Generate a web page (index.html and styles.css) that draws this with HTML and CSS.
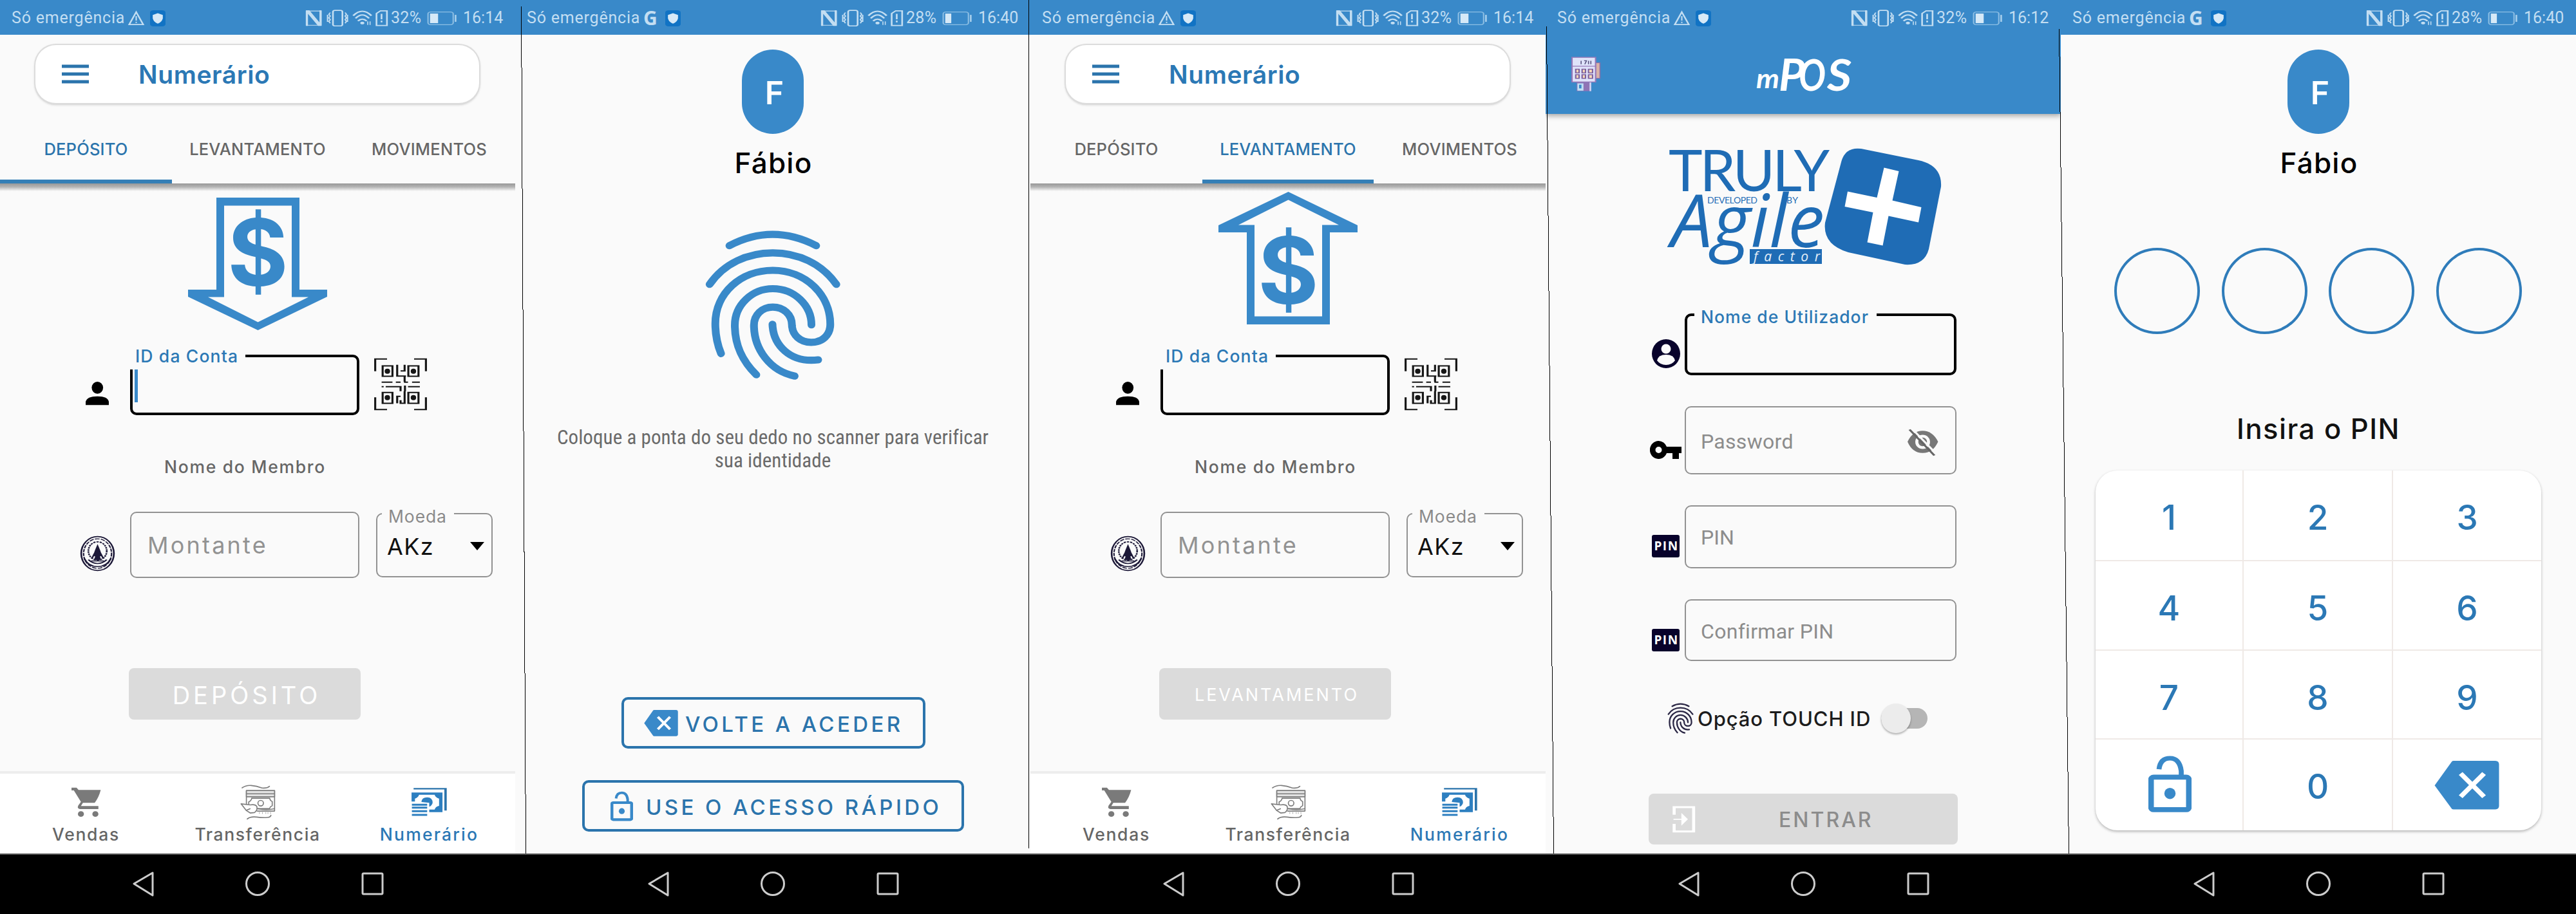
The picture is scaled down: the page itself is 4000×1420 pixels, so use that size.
FILE: index.html
```html
<!DOCTYPE html>
<html lang="pt">
<head>
<meta charset="utf-8">
<title>mPOS</title>
<link rel="stylesheet" href="styles.css">
</head>
<body>
<svg class="defs" aria-hidden="true">
  <symbol id="warn" viewBox="380 42 52 72" preserveAspectRatio="none"><path d="M406 50L427 106H385Z" fill="none" stroke="#c3def2" stroke-width="5"/><path d="M406 68v20M406 93v6" stroke="#c3def2" stroke-width="4"/></symbol>
  <symbol id="shield" viewBox="446 44 46 72" preserveAspectRatio="none"><rect x="446" y="44" width="46" height="72" rx="10" fill="#1173c4"/><path d="M469 57l15 8v14q-2 17-15 25q-13-8-15-25V65z" fill="#d6e9f7"/></symbol>
  <symbol id="signals" viewBox="905 38 250 84" preserveAspectRatio="none">
    <g fill="none" stroke="#c3def2" stroke-width="5">
      <path d="M909 44H919L949 98V44H955V114H945L915 60V114H909Z" fill="#c3def2" stroke="none"/><path d="M910 47H954V111H910Z" stroke-width="3"/>
      <rect x="989" y="44" width="28" height="70" rx="6"/><path d="M981 54l-4 8 4 8-4 8 4 8-4 8 4 8M973 64v32M1025 54l4 8-4 8 4 8-4 8 4 8-4 8M1032 64v32" stroke-width="4"/>
      <path d="M1049 68Q1076 28 1103 68M1056 80Q1076 50 1096 80M1063 92Q1076 75 1089 92" stroke-width="6"/><circle cx="1076" cy="101" r="6" fill="#c3def2" stroke="none"/><path d="M1092 94v16M1099 94v16" stroke-width="3"/>
      <path d="M1118 58L1130 46H1149V112H1118Z"/><path d="M1133 60v24M1133 90v8"/>
    </g>
  </symbol>
  <symbol id="bat" viewBox="1265 44 92 68" preserveAspectRatio="none"><rect x="1270" y="49" width="75" height="58" rx="8" fill="none" stroke="#8dbfe4" stroke-width="4"/><rect x="1276" y="56" width="24" height="44" fill="#d6e9f7"/><path d="M1352 62v32" stroke="#a9d0ec" stroke-width="5"/></symbol>
  <symbol id="bat-low" viewBox="1265 44 92 68" preserveAspectRatio="none"><rect x="1270" y="49" width="75" height="58" rx="8" fill="none" stroke="#8dbfe4" stroke-width="4"/><rect x="1276" y="56" width="18" height="44" fill="#d6e9f7"/><path d="M1352 62v32" stroke="#a9d0ec" stroke-width="5"/></symbol>
  <symbol id="menu" viewBox="0 0 42 30"><path d="M0 3h42M0 15h42M0 27h42" stroke="#2b74ac" stroke-width="5"/></symbol>
  <symbol id="person" viewBox="252 216 73 114" preserveAspectRatio="none"><ellipse cx="289" cy="247" rx="17" ry="28"/><path d="M254 328V312Q258 287 289 287T323 312V328Z"/></symbol>
  <symbol id="qr" viewBox="1110 108 160 244" preserveAspectRatio="none">
    <g fill="none" stroke="#161616" stroke-width="6">
      <path d="M1150 113H1115V170M1230 113H1265V170M1150 347H1115V290M1230 347H1265V290"/>
      <rect x="1137" y="145" width="29" height="48"/><rect x="1213" y="145" width="30" height="48"/><rect x="1137" y="268" width="29" height="50"/><rect x="1213" y="268" width="30" height="50"/>
      <path d="M1180 140V192H1206M1202 140V168H1190M1134 220H1166M1176 220H1190M1202 192V218M1200 220H1212M1224 220H1247M1134 241H1140M1146 241H1190V262M1203 236V262M1212 241H1247M1190 286H1180V318M1202 262V318H1190V304"/>
    </g>
    <g fill="#161616"><ellipse cx="1151" cy="170" rx="8" ry="12"/><ellipse cx="1228" cy="170" rx="8" ry="12"/><ellipse cx="1151" cy="292" rx="8" ry="12"/><ellipse cx="1228" cy="292" rx="8" ry="12"/></g>
  </symbol>
  <symbol id="coin" viewBox="237 939 104 166" preserveAspectRatio="none">
    <g fill="none" stroke="#1d1938">
      <ellipse cx="289" cy="1022" rx="48" ry="78" stroke-width="5"/><ellipse cx="289" cy="1022" rx="41" ry="68" stroke-width="4" stroke-dasharray="14 4"/>
      <ellipse cx="289" cy="1010" rx="27" ry="42" stroke-width="5" stroke-dasharray="7 3"/>
      <path d="M250 1045Q262 1082 289 1082T328 1045M262 1050Q275 1068 289 1068T316 1050" stroke-width="5"/>
    </g>
    <path d="M289 978L296 1004 302 1030 296 1036 300 1052H278L282 1036 276 1030 282 1004Z" fill="#1d1938"/><path d="M280 1022l-8 24M298 1022l8 24M270 1056h38" stroke="#1d1938" stroke-width="5"/>
  </symbol>
  <symbol id="cart" viewBox="205 731 92 140" preserveAspectRatio="none"><path d="M207 733H222L228 744H294Q288 780 276 803H241L235 818H287V832H232Q223 830 227 816L235 799 214 746H207Z" fill="#7a7a7a"/><ellipse cx="235" cy="855" rx="9" ry="13" fill="#7a7a7a"/><ellipse cx="278" cy="855" rx="9" ry="13" fill="#7a7a7a"/></symbol>
  <symbol id="transfer" viewBox="575 563 172 172">
    <g fill="none" stroke="#7d7d7d" stroke-width="5" stroke-linecap="round" stroke-linejoin="round">
      <path d="M587 584Q605 571 630 573T680 585Q705 587 715 577M611 730Q625 717 655 721T705 723Q720 722 722 713"/>
      <path d="M607 662V597H739V693H658" fill="#fff"/><path d="M607 597H739V626H607Z" fill="#e2e2e2"/><path d="M607 612H739"/>
      <path d="M632 633Q630 645 618 650M632 633H716Q718 645 728 648V668Q718 672 715 682H658M618 650V660"/>
      <circle cx="674" cy="656" r="13"/><path d="M661 682Q700 690 737 682"/>
      <path d="M582 659L625 664Q650 660 656 672Q660 690 645 700L625 702 606 690M582 659L606 690 624 682" fill="#fff"/><path d="M668 699v6M682 699v6M698 699v6M708 699v6M720 699v6" stroke-width="2"/>
    </g>
  </symbol>
  <symbol id="cash" viewBox="1222 731 108 138" preserveAspectRatio="none">
    <path d="M1230 738H1324V840" fill="none" stroke="#2b74ac" stroke-width="7"/>
    <path d="M1224 756H1315V847H1276V835H1292Q1294 822 1305 818V784Q1294 778 1292 766H1246Q1244 778 1234 784V798H1224Z" fill="#2d7fc0"/>
    <path d="M1253 800Q1254 778 1270 778T1286 804Q1284 818 1276 822V804Z" fill="#2d7fc0"/>
    <path d="M1225 813H1270M1225 826H1270M1225 843H1270M1225 860H1270" stroke="#2d7fc0" stroke-width="9"/>
  </symbol>
  <symbol id="finger" viewBox="560 735 410 485" preserveAspectRatio="none">
    <g fill="none" stroke="currentColor" stroke-width="23" stroke-linecap="round">
      <path d="M636 788Q764 716 894 788M577 912C620 845 690 811 765 811S910 845 954 912"/>
      <path d="M611 1134C598 1100 594 1070 594 1038C594 940 670 867 765 867C862 867 936 945 936 1040C936 1075 912 1098 879 1098C847 1098 823 1075 822 1043C822 1008 796 985 765 985C733 985 709 1010 709 1043C709 1120 757 1190 830 1206"/>
      <path d="M716 1202C672 1155 652 1105 652 1043C652 978 703 926 765 926C830 926 880 980 880 1042M764 1040C766 1105 815 1165 900 1154"/>
    </g>
  </symbol>
  <symbol id="unlock" viewBox="283 1026 130 196" preserveAspectRatio="none">
    <rect x="291" y="1101" width="114" height="110" rx="8" fill="none" stroke="#3989c9" stroke-width="17"/>
    <path d="M315 1074Q319 1037 348 1037T382 1080V1098" fill="none" stroke="#3989c9" stroke-width="15"/><ellipse cx="348" cy="1156" rx="17" ry="19" fill="#3989c9"/>
  </symbol>
  <symbol id="back" viewBox="1142 1047 195 165" preserveAspectRatio="none"><path d="M1143 1130L1194 1050Q1196 1047 1200 1047H1325Q1336 1048 1336 1059V1199Q1336 1210 1325 1211H1200Q1196 1211 1194 1208Z" fill="#3989c9"/><path d="M1221 1090L1291 1168M1291 1090L1221 1168" stroke="#fff" stroke-width="15"/></symbol>
  <symbol id="sysnav" viewBox="0 0 392 40"><g fill="none" stroke="#ccc" stroke-width="3"><path d="M2 19L31 2V37Z" stroke-linejoin="round"/><circle cx="194" cy="19" r="17.500"/><rect x="357" y="3" width="31" height="32" rx="1.500"/></g></symbol>
</svg>

<div class="board">

  <section class="screen">
    <header class="status"><span class="carrier">Só emergência</span><svg class="i-warn"><use href="#warn"/></svg><svg class="i-shield"><use href="#shield"/></svg><svg class="i-signals"><use href="#signals"/></svg><span class="pct">32%</span><svg class="i-bat"><use href="#bat"/></svg><span class="clock">16:14</span></header>
    <div class="titlebar"><svg class="i-menu"><use href="#menu"/></svg><h1>Numerário</h1></div>
    <nav class="tabs"><span class="active">DEPÓSITO</span><span>LEVANTAMENTO</span><span>MOVIMENTOS</span></nav>
    <div class="tabs-shadow"></div>
    <svg class="hero down" viewBox="0 0 216 208">
      <path d="M44 0H173V143H216V154L108.500 206 0 154V143H44ZM56 12.500V154.500H31L108.500 193.500 187 154.500H161V12.500Z" fill="#3989c9" fill-rule="evenodd"/>
      <text x="108.500" y="137" class="dollar">$</text>
    </svg>
    <div class="row account">
      <div class="lead"><svg class="i-person"><use href="#person"/></svg></div>
      <div class="field focus"><span class="notch id">ID da Conta</span><i class="caret"></i></div>
      <svg class="i-qr"><use href="#qr"/></svg>
    </div>
    <p class="member">Nome do Membro</p>
    <div class="row amount">
      <div class="lead"><svg class="i-coin"><use href="#coin"/></svg></div>
      <div class="field"><span class="hint">Montante</span></div>
      <div class="field select"><span class="notch coin">Moeda</span><span class="value">AKz</span><i class="drop"></i></div>
    </div>
    <div class="btn-off">DEPÓSITO</div>
    <nav class="bottom">
      <div class="tab"><svg class="i-cart"><use href="#cart"/></svg><span class="t1">Vendas</span></div>
      <div class="tab"><svg class="i-transfer"><use href="#transfer"/></svg><span class="t2">Transferência</span></div>
      <div class="tab on"><svg class="i-cash"><use href="#cash"/></svg><span class="t3">Numerário</span></div>
    </nav>
    <footer class="sys"><svg><use href="#sysnav"/></svg></footer>
  </section>

  <section class="screen">
    <header class="status"><span class="carrier">Só emergência</span><b class="g">G</b><svg class="i-shield"><use href="#shield"/></svg><svg class="i-signals"><use href="#signals"/></svg><span class="pct">28%</span><svg class="i-bat"><use href="#bat-low"/></svg><span class="clock">16:40</span></header>
    <div class="avatar">F</div>
    <div class="name">Fábio</div>
    <svg class="i-finger"><use href="#finger"/></svg>
    <p class="scan">Coloque a ponta do seu dedo no scanner para verificar<br>sua identidade</p>
    <div class="btn-line volte"><svg><use href="#back"/></svg><span>VOLTE A ACEDER</span></div>
    <div class="btn-line rapido"><svg><use href="#unlock"/></svg><span>USE O ACESSO RÁPIDO</span></div>
    <footer class="sys"><svg><use href="#sysnav"/></svg></footer>
  </section>

  <section class="screen">
    <header class="status"><span class="carrier">Só emergência</span><svg class="i-warn"><use href="#warn"/></svg><svg class="i-shield"><use href="#shield"/></svg><svg class="i-signals"><use href="#signals"/></svg><span class="pct">32%</span><svg class="i-bat"><use href="#bat"/></svg><span class="clock">16:14</span></header>
    <div class="titlebar"><svg class="i-menu"><use href="#menu"/></svg><h1>Numerário</h1></div>
    <nav class="tabs"><span>DEPÓSITO</span><span class="active">LEVANTAMENTO</span><span>MOVIMENTOS</span></nav>
    <div class="tabs-shadow"></div>
    <svg class="hero up" viewBox="0 0 216 208">
      <path d="M44 206H173V63H216V52L108.500 0 0 52V63H44ZM56 193.500V51.500H31L108.500 12.500 187 51.500H161V193.500Z" fill="#3989c9" fill-rule="evenodd"/>
      <text x="108.500" y="174" class="dollar">$</text>
    </svg>
    <div class="row account">
      <div class="lead"><svg class="i-person"><use href="#person"/></svg></div>
      <div class="field focus"><span class="notch id">ID da Conta</span></div>
      <svg class="i-qr"><use href="#qr"/></svg>
    </div>
    <p class="member">Nome do Membro</p>
    <div class="row amount">
      <div class="lead"><svg class="i-coin"><use href="#coin"/></svg></div>
      <div class="field"><span class="hint">Montante</span></div>
      <div class="field select"><span class="notch coin">Moeda</span><span class="value">AKz</span><i class="drop"></i></div>
    </div>
    <div class="btn-off small">LEVANTAMENTO</div>
    <nav class="bottom">
      <div class="tab"><svg class="i-cart"><use href="#cart"/></svg><span class="t1">Vendas</span></div>
      <div class="tab"><svg class="i-transfer"><use href="#transfer"/></svg><span class="t2">Transferência</span></div>
      <div class="tab on"><svg class="i-cash"><use href="#cash"/></svg><span class="t3">Numerário</span></div>
    </nav>
    <footer class="sys"><svg><use href="#sysnav"/></svg></footer>
  </section>

  <section class="screen">
    <header class="status"><span class="carrier">Só emergência</span><svg class="i-warn"><use href="#warn"/></svg><svg class="i-shield"><use href="#shield"/></svg><svg class="i-signals"><use href="#signals"/></svg><span class="pct">32%</span><svg class="i-bat"><use href="#bat"/></svg><span class="clock">16:12</span></header>
    <div class="appbar">
      <svg class="i-pos" viewBox="96 245 90 155" preserveAspectRatio="none">
        <rect x="168" y="272" width="13" height="68" fill="#d9b3a8" stroke="#8d6fa8" stroke-width="3"/>
        <rect x="98" y="248" width="70" height="108" fill="#dfe3fa" stroke="#9678b8" stroke-width="4"/>
        <path d="M98 287H168" stroke="#9678b8" stroke-width="3"/><path d="M125 278V263M134 263h7l-5 15M147 278V263M154 278V263" stroke="#55507c" stroke-width="3" fill="none"/>
        <g fill="#f6d9b8" stroke="#7d5f9c" stroke-width="4"><rect x="109" y="300" width="10" height="16"/><rect x="128" y="300" width="10" height="16"/><rect x="147" y="300" width="12" height="16"/><rect x="109" y="324" width="10" height="16"/><rect x="128" y="324" width="10" height="16"/><rect x="147" y="324" width="12" height="16"/></g>
        <rect x="112" y="358" width="43" height="38" fill="#8f74b5"/><rect x="114" y="362" width="18" height="32" fill="#bfe0f5"/><rect x="119" y="368" width="7" height="16" fill="#3989c9"/><rect x="150" y="358" width="5" height="38" fill="#cfd6f5"/>
      </svg>
      <svg class="brand" viewBox="325 85 154 62"><g fill="#fff" font-family="Lato, sans-serif" font-style="italic"><text x="327" y="137" font-size="42" font-weight="700" textLength="36" lengthAdjust="spacingAndGlyphs">m</text><text x="362" y="141" font-size="68" font-weight="700" textLength="41" lengthAdjust="spacingAndGlyphs">P</text><text x="393" y="141" font-size="66" font-weight="700" textLength="42" lengthAdjust="spacingAndGlyphs">O</text><text x="437" y="141" font-size="66" font-weight="700" textLength="38" lengthAdjust="spacingAndGlyphs">S</text></g></svg>
    </div>
    <svg class="logo" viewBox="185 225 435 190">
      <g fill="#1f6cb5">
        <text x="191" y="296.500" font-family="Lato, sans-serif" font-size="89" textLength="250" lengthAdjust="spacing">TRULY</text>
        <text x="195" y="384" font-family="Open Sans, sans-serif" font-style="italic" font-size="114" textLength="238">Agile</text>
        <text x="251" y="316" font-family="Lato, sans-serif" font-size="14" textLength="78">DEVELOPED</text>
        <text x="374" y="316" font-family="Lato, sans-serif" font-size="14" textLength="18">BY</text>
        <rect x="317" y="387" width="112" height="23"/>
        <path d="M459.500 250Q466 228 490 231L579 249Q616 257 614 290L595 387Q588 413 558 411L470 392Q430 380 434 346Z"/>
      </g>
      <text x="323" y="406" fill="#e4eef8" font-family="Open Sans, sans-serif" font-style="italic" font-size="21" textLength="103">factor</text>
      <path d="M525.500 260.500L548.500 266 538.500 311.500 583.500 322 579 345.500 532.500 335.500 523.500 381.500 499.500 376.500 508.500 330 464.500 321 469 297.500 514.500 307Z" fill="#fff"/>
    </svg>
    <div class="login">
      <div class="lrow user"><svg class="i-user" viewBox="0 0 44 45" preserveAspectRatio="none"><ellipse cx="22" cy="22.500" rx="22" ry="22.500" fill="#08022b"/><circle cx="22" cy="15" r="7.500" fill="#fafafa"/><path d="M8 33Q10 24 22 24T36 33Q31 40 22 40T8 33Z" fill="#fafafa"/></svg><div class="field focus"><span class="notch un">Nome de Utilizador</span></div></div>
      <div class="lrow pass"><svg class="i-key" viewBox="0 0 49 28" preserveAspectRatio="none"><path d="M13.500 0A13.500 14 0 0 1 26 9H49V19H45V28H35V19H26A13.500 14 0 1 1 13.500 0ZM13.500 9A5 5 0 1 0 13.500 19 5 5 0 0 0 13.500 9Z" fill-rule="evenodd"/></svg><div class="field"><span class="hint r pw">Password</span>
        <svg class="i-eye" viewBox="1094 320 96 128" preserveAspectRatio="none"><path d="M1096 380Q1112 330 1141 330T1187 380Q1172 432 1141 432T1096 380Z" fill="#777"/><ellipse cx="1141" cy="381" rx="22" ry="33" fill="#fafafa"/><ellipse cx="1141" cy="381" rx="13" ry="20" fill="#777"/><path d="M1108 318L1184 440" stroke="#fafafa" stroke-width="7"/><path d="M1102 324L1176 444" stroke="#666" stroke-width="7"/></svg></div></div>
      <div class="lrow pin"><b class="pinbox">PIN</b><div class="field"><span class="hint r pn">PIN</span></div></div>
      <div class="lrow cpin"><b class="pinbox">PIN</b><div class="field"><span class="hint r">Confirmar PIN</span></div></div>
    </div>
    <div class="touch"><svg class="i-tf"><use href="#finger"/></svg><span>Opção TOUCH ID</span><div class="switch"><i></i></div></div>
    <div class="btn-enter"><svg viewBox="395 601 69 128" preserveAspectRatio="none"><path d="M400 645V610H458V722H400V687" fill="none" stroke="#fff" stroke-width="9"/><path d="M398 666H430M424 645L438 666 424 687Z" fill="#fff" stroke="#fff" stroke-width="5"/></svg><span>ENTRAR</span></div>
    <footer class="sys"><svg><use href="#sysnav"/></svg></footer>
  </section>

  <section class="screen">
    <header class="status"><span class="carrier">Só emergência</span><b class="g">G</b><svg class="i-shield"><use href="#shield"/></svg><svg class="i-signals"><use href="#signals"/></svg><span class="pct">28%</span><svg class="i-bat"><use href="#bat-low"/></svg><span class="clock">16:40</span></header>
    <div class="avatar">F</div>
    <div class="name">Fábio</div>
    <div class="dots"><i></i><i></i><i></i><i></i></div>
    <p class="enter-pin">Insira o PIN</p>
    <div class="keypad">
      <span>1</span><span>2</span><span>3</span><span>4</span><span>5</span><span>6</span><span>7</span><span>8</span><span>9</span>
      <span><svg class="k-unlock"><use href="#unlock"/></svg></span><span>0</span><span><svg class="k-back"><use href="#back"/></svg></span>
    </div>
    <footer class="sys"><svg><use href="#sysnav"/></svg></footer>
  </section>

  <svg class="dividers" viewBox="0 0 4000 1420"><g stroke="#000" stroke-width="1" shape-rendering="crispEdges"><path d="M809.500 10L816.500 1326M1597.500 0V1318M2401.500 41L2412.500 1326M3197.500 45L3212.500 1326"/></g></svg>
</div>
</body>
</html>
```
FILE: styles.css
```css
* { box-sizing: border-box; }
body { margin: 0; background: #fafafa; font-family: Inter, "Open Sans", sans-serif; color: #666; }
h1, p { margin: 0; font-weight: inherit; }
svg { display: block; flex: none; }
i { display: block; }
.defs { position: absolute; width: 0; height: 0; }

.board { position: relative; display: flex; width: 4000px; height: 1420px; overflow: hidden; }
.screen { width: 800px; height: 1420px; flex: none; display: flex; flex-direction: column; background: #fafafa; }
.dividers { position: absolute; left: 0; top: 0; width: 4000px; height: 1420px; }

/* Android status bar */
.status { height: 54px; flex: none; display: flex; align-items: center; padding: 2px 0 0 18px; background: #3989c9; color: #c3def2; font: 25px/52px Roboto, sans-serif; white-space: nowrap; }
.carrier { width: 180px; letter-spacing: .8px; }
.i-warn { width: 27px; height: 25px; }
.g { width: 27px; font: 700 30px/52px "Open Sans", sans-serif; padding-left: 1px; }
.i-shield { width: 24px; height: 25px; margin-left: 8px; }
.i-signals { width: 131px; height: 29px; margin-left: 216px; }
.pct { width: 55px; margin-left: 3px; letter-spacing: .29px; }
.i-bat { width: 48px; height: 23px; }
.clock { margin-left: 9px; }

/* Android navigation bar */
.sys { margin-top: auto; height: 94px; flex: none; background: #000; border-top: 2px solid #555; padding: 26px 0 0 206px; }
.sys svg { width: 392px; height: 40px; }

/* Title and tabs */
.titlebar { margin: 14px 54px 0 53px; height: 95px; flex: none; border: 2px solid #dcdcdc; border-bottom-width: 3px; border-radius: 34px; background: #fff; display: flex; align-items: center; padding-left: 41px; color: #2b78b5; box-shadow: 0 1px 3px rgba(0,0,0,.1); }
.i-menu { width: 42px; height: 30px; }
.titlebar h1 { margin-left: 77px; font-size: 39px; font-weight: 600; letter-spacing: .6px; line-height: 80px; padding-top: 2px; }
.tabs { display: grid; grid-template-columns: 267px 266px 267px; height: 122px; flex: none; font-size: 25.500px; font-weight: 450; line-height: 138px; text-align: center; letter-spacing: .2px; }
.tabs span { height: 122px; border-bottom: 6px solid transparent; }
.tabs .active { color: #2b74ac; border-color: #357fb6; }
.tabs-shadow { height: 12px; flex: none; background: linear-gradient(#989898, #b4b4b4 45%, #fafafa); }

.hero { width: 216px; height: 208px; margin-left: 292px; }
.hero.down { margin-top: 10px; margin-bottom: 36px; }
.hero.up { margin-top: 1px; margin-bottom: 45px; }
.dollar { font: 700 144px Inter, sans-serif; fill: #3989c9; text-anchor: middle; }

/* Form rows */
.row { display: grid; grid-template-columns: 202px 356px auto; flex: none; }
.account { height: 94px; }
.field { position: relative; border: 2.500px solid #929292; border-radius: 10px; }
.field.focus { border: 4px solid #000; }
.notch { position: absolute; background: #fafafa; font-size: 26.500px; font-weight: 500; line-height: 26px; white-space: nowrap; }
.notch.id { left: -6px; top: -15px; padding-left: 10px; width: 181px; height: 34px; letter-spacing: 1.150px; color: #2b78b5; }
.caret { width: 5px; height: 52px; margin: 18px 0 0 3px; background: #3989c9; }
.i-person { width: 38px; height: 38px; margin: 41px 0 0 132px; }
.i-qr { width: 84px; height: 82px; margin: 5px 0 0 22px; }
.member { margin-top: 63px; height: 34px; flex: none; line-height: 34px; padding-left: 255px; font-size: 26.500px; font-weight: 450; letter-spacing: 1.700px; }
.amount { margin-top: 53px; height: 103px; }
.i-coin { width: 55px; height: 56px; margin: 37px 0 0 124px; }
.hint { display: block; padding: 3px 0 0 25px; color: #929292; font-size: 36px; line-height: 95px; letter-spacing: 3.200px; }
.field.select { margin: 2px 0 1px 26px; width: 181px; display: flex; align-items: center; }
.notch.coin { left: 7px; top: -10px; padding-left: 10px; width: 112px; font-weight: 400; letter-spacing: .9px; color: #8a8a8a; }
.value { width: 128px; padding: 3px 0 0 15px; color: #111; font-size: 36px; letter-spacing: 1.300px; }
.drop { border: 11px solid transparent; border-top: 13px solid #000; border-bottom: 0; margin: 3px 0 0 16px; }
.btn-off { margin: 140px 0 0 200px; width: 360px; height: 80px; flex: none; border-radius: 8px; background: #dbdbdb; color: #fff; text-align: center; font-size: 38px; line-height: 84px; letter-spacing: 5px; text-indent: 6px; }
.btn-off.small { font-size: 27px; letter-spacing: 3px; text-indent: 5px; }

/* Bottom navigation */
.bottom { margin-top: auto; height: 128px; flex: none; border-top: 4px solid #ededed; background: #fff; display: grid; grid-template-columns: 267px 266px 267px; font-size: 26.500px; font-weight: 450; }
.bottom + .sys { margin-top: 0; }
.tab { display: flex; flex-direction: column; align-items: center; }
.tab.on { color: #2b78b5; }
.tab span { line-height: 28px; }
.i-cart { width: 48px; height: 47px; margin: 21px 0 12px; }
.i-transfer { width: 57px; height: 57px; margin: 15px 0 8px; }
.i-cash { width: 57px; height: 46px; margin: 21px 0 13px; }
.t1 { letter-spacing: 1.700px; }
.t2 { letter-spacing: 1.600px; }
.t3 { letter-spacing: 2.200px; }

/* Avatar screens */
.avatar { margin: 23px 0 0 352px; width: 96px; height: 131px; flex: none; border-radius: 48px; background: #3989c9; color: #fff; text-align: center; font-size: 50px; font-weight: 600; line-height: 134px; padding-left: 5px; }
.name { margin-top: 20px; height: 50px; flex: none; text-align: center; color: #000; font-size: 44px; font-weight: 500; line-height: 50px; letter-spacing: 1.200px; padding-left: 2px; }
.i-finger { width: 214px; height: 235px; margin: 78px 0 0 293px; color: #3989c9; }
.scan { margin-top: 71px; flex: none; text-align: center; font: 31px/36px "Roboto Condensed", Roboto, sans-serif; letter-spacing: .07px; color: #6a6a6a; }
.btn-line { display: flex; align-items: center; flex: none; height: 80px; border: 4px solid #2b74ac; border-radius: 10px; color: #2b74ac; font-size: 33px; font-weight: 450; letter-spacing: 4.400px; white-space: nowrap; }
.volte { margin: 349px 0 0 165px; width: 472px; padding-left: 31px; }
.volte svg { width: 53px; height: 41px; }
.volte span { margin-left: 11px; padding-top: 3px; }
.rapido { margin: 49px 0 0 104px; width: 593px; padding-left: 40px; }
.rapido svg { width: 35px; height: 47px; }
.rapido span { margin-left: 20px; padding-top: 3px; }

/* Login screen */
.appbar { height: 123px; flex: none; display: flex; background: #3989c9; padding: 31px 0 0 40px; box-shadow: 0 3px 8px rgba(0,0,0,.35); clip-path: inset(0 0 -16px 0); }
.i-pos { width: 47px; height: 55px; margin-top: 3px; }
.brand { width: 154px; height: 62px; margin-left: 238px; overflow: visible; }
.logo { width: 435px; height: 190px; margin: 48px 0 0 185px; overflow: visible; }
.login { display: grid; grid-template-rows: 96px 106px 98px 96px; row-gap: 48px; margin-top: 72px; flex: none; }
.lrow { display: grid; grid-template-columns: 216px 422px; }
.i-user { width: 44px; height: 45px; margin: 40px 0 0 165px; }
.i-key { width: 49px; height: 28px; margin: 54px 0 0 162px; }
.pinbox { display: block; width: 43px; height: 35px; margin: 46px 0 0 165px; border-radius: 3px; background: #08022b; color: #fff; font: 700 19px/35px "Open Sans", sans-serif; letter-spacing: 1.500px; text-align: center; padding-left: 2px; }
.notch.un { left: 11px; top: -12px; padding-left: 10px; width: 283px; letter-spacing: 1.030px; color: #2b78b5; }
.hint.r { font: 32px/84px Roboto, sans-serif; padding: 6px 0 0 23px; letter-spacing: .3px; color: #8c8c8c; }
.hint.r.pw { padding-top: 10px; line-height: 86px; }
.hint.r.pn { letter-spacing: 0; }
.i-eye { position: absolute; right: 25px; top: 33px; width: 50px; height: 43px; }
.touch { display: flex; align-items: center; height: 50px; margin: 64px 0 0 189px; flex: none; color: #1c1c1c; font-size: 31px; font-weight: 500; letter-spacing: .9px; }
.i-tf { width: 41px; height: 48px; color: #2b2745; }
.touch span { width: 284px; padding-left: 6px; }
.switch { width: 72px; height: 32px; border-radius: 16px; background: #b5b5b5; margin-left: 7px; }
.switch i { width: 46px; height: 46px; margin-top: -7px; border-radius: 50%; background: #ececec; box-shadow: 0 2px 3px rgba(0,0,0,.3); }
.btn-enter { display: flex; align-items: center; margin: 92px 0 0 160px; width: 480px; height: 79px; flex: none; border-radius: 8px; background: #dbdbdb; color: #8c8c8c; font-size: 32px; font-weight: 450; letter-spacing: 3px; padding-left: 37px; }
.btn-enter svg { width: 36px; height: 43px; }
.btn-enter span { margin-left: 129px; padding-top: 2px; }

/* PIN screen */
.dots { display: flex; gap: 33.500px; margin: 107px 0 0 83px; flex: none; }
.dots i { width: 133px; height: 134px; border: 4px solid #2f7cba; border-radius: 50%; }
.enter-pin { margin-top: 116px; height: 62px; flex: none; text-align: center; color: #111; font-size: 43.500px; font-weight: 450; line-height: 62px; letter-spacing: 1.500px; }
.keypad { margin: 34px 0 0 54px; width: 692px; height: 559px; flex: none; display: grid; grid-template-columns: 230px 232px 230px; grid-template-rows: 141px 139px 138px 141px; border-radius: 34px; background: #fff; box-shadow: 0 2px 4px rgba(0,0,0,.28); overflow: hidden; color: #2b78b5; font-size: 53px; font-weight: 500; text-align: center; line-height: 147px; }
.keypad span { border-right: 2px solid #efe9e6; border-bottom: 2px solid #efe9e6; }
.keypad span:nth-child(3n) { border-right: 0; }
.keypad span:nth-child(n+10) { border-bottom: 0; }
.k-unlock { width: 67px; height: 90px; margin: 24px 0 0 82px; }
.k-back { width: 101px; height: 76px; margin: 33px 0 0 64px; }
```
